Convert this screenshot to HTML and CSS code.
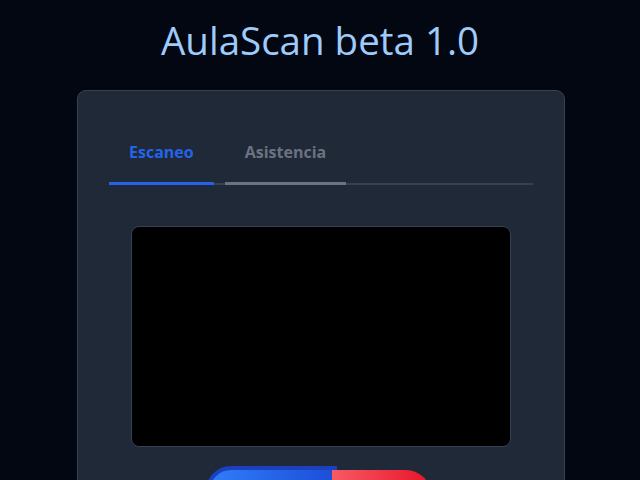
FILE: index.html
```html
<!DOCTYPE html>
<html lang="es">
<head>
<meta charset="utf-8">
<title>AulaScan beta 1.0</title>
<link rel="stylesheet" href="styles.css">
</head>
<body>
<div class="app">
  <h1 class="title">AulaScan beta 1.0</h1>
  <div class="card">
    <div class="tabs">
      <button class="tab tab-active">Escaneo</button>
      <button class="tab tab-idle">Asistencia</button>
    </div>
    <div class="video"></div>
    <div class="actions">
      <button class="btn btn-blue"></button>
      <button class="btn btn-red"></button>
    </div>
  </div>
</div>
</body>
</html>
```
FILE: styles.css
```css
html, body {
  margin: 0;
  padding: 0;
  background: #030712;
  height: 100%;
  overflow: hidden;
}
.app {
  display: flex;
  flex-direction: column;
  align-items: center;
  font-family: "Open Sans", "Noto Sans", sans-serif;
  padding-top: 14px;
}
.title {
  margin: 0;
  font-weight: 400;
  font-size: 38.5px;
  line-height: 52px;
  color: #9fcbfb;
}
.card {
  margin-top: 24px;
  margin-left: 2px;
  width: 488px;
  box-sizing: border-box;
  background: #1f2937;
  border: 1px solid #374151;
  border-radius: 9px;
  padding: 31px 31px 40px;
  display: flex;
  flex-direction: column;
  align-items: center;
}
.tabs {
  align-self: stretch;
  display: flex;
  gap: 11px;
  border-bottom: 2px solid #374151;
}
.tab {
  background: none;
  border: none;
  border-bottom: 3px solid transparent;
  margin-bottom: -2px;
  padding: 20px 20px 20px;
  font-family: "Open Sans", "Noto Sans", sans-serif;
  font-weight: 700;
  font-size: 16px;
  line-height: 20px;
}
.tab-active {
  color: #2563eb;
  border-bottom-color: #2563eb;
}
.tab-idle {
  color: #6b7280;
  border-bottom-color: #6b7280;
}
.video {
  margin-top: 41px;
  width: 380px;
  height: 221px;
  box-sizing: border-box;
  background: #000;
  border: 1px solid #374151;
  border-radius: 8px;
}
.actions {
  margin-top: 19px;
  display: flex;
  align-items: flex-start;
  padding-right: 5px;
}
.btn {
  height: 50px;
  border: none;
  padding: 0;
}
.btn-blue {
  width: 131px;
  border: 4px solid #1d40c0;
  border-radius: 30px 0 0 30px;
  background: linear-gradient(90deg, #2f7df8, #1d4ed8);
}
.btn-red {
  width: 99px;
  margin-top: 4px;
  margin-left: -5px;
  border-radius: 0 30px 30px 0;
  background: linear-gradient(90deg, #f75a64, #e8142a);
}
```
